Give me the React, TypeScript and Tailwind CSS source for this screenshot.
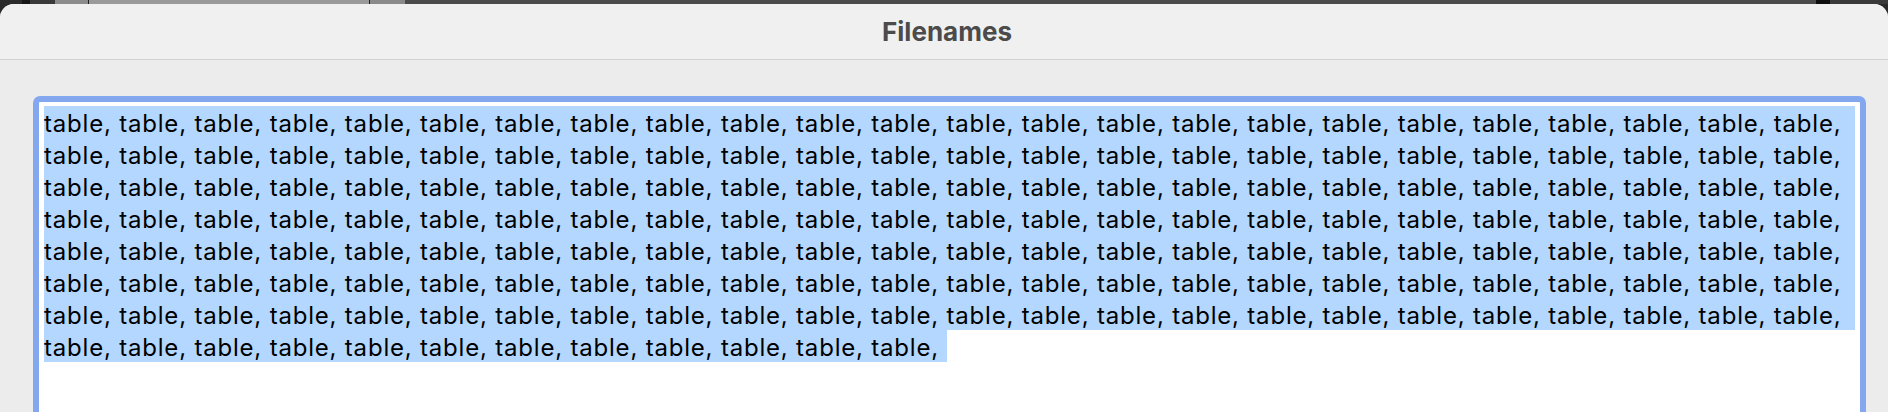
import React from "react";

const FULL_LINES = 7;
const PER_LINE = 24;
const LAST_LINE = 12;

function Backdrop() {
  // dark sliver of the windows behind the sheet
  return (
    <div className="flex h-[4px] w-full">
      <div className="w-[22px] bg-[#2b2b2b]" />
      <div className="w-[8px] bg-[#161616]" />
      <div className="w-[25px] bg-[#3a3a3a]" />
      <div className="w-[33px] bg-[#8c8c8c]" />
      <div className="w-[282px] bg-[#9a9a9a] border-x border-[#222]" />
      <div className="w-[35px] bg-[#8a8a8a]" />
      <div className="flex-1 bg-[#4b4b4b]" />
      <div className="w-[14px] bg-[#0f0f0f]" />
      <div className="w-[58px] bg-[#3a3a3a]" />
    </div>
  );
}

export default function App() {
  const line = "table, ".repeat(PER_LINE - 1) + "table,";
  const last = "table, ".repeat(LAST_LINE);

  return (
    <div className="h-[412px] w-[1888px] overflow-hidden bg-[#2a2a2a]">
      <Backdrop />
      <div className="flex h-[408px] flex-col overflow-hidden rounded-t-[14px] bg-[#ececec]">
        <div className="flex h-[56px] shrink-0 items-center justify-center border-b border-[#d2d2d2] bg-[#f0f0f0]">
          <h1 className="pl-[6px] text-[26px] font-bold text-[#4b4b4b] font-['Inter',sans-serif]">
            Filenames
          </h1>
        </div>

        <div className="flex-1 pt-[36px] pl-[33px] pr-[22px]">
          <div className="h-[400px] rounded-[7px] border-[6px] border-[#84a8ef] bg-white pt-[4px] pl-[5px] pr-[5px]">
            <div className="font-['Inter',sans-serif] text-[24px] leading-[32px] tracking-[0.8px] text-black whitespace-pre">
              {Array.from({ length: FULL_LINES }).map((_, i) => (
                <div key={i} className="h-[32px] bg-[#b3d7ff] pt-[2px]">
                  {line}
                </div>
              ))}
              <div className="inline-block h-[32px] bg-[#b3d7ff] pt-[2px]">{last}</div>
            </div>
          </div>
        </div>
      </div>
    </div>
  );
}
